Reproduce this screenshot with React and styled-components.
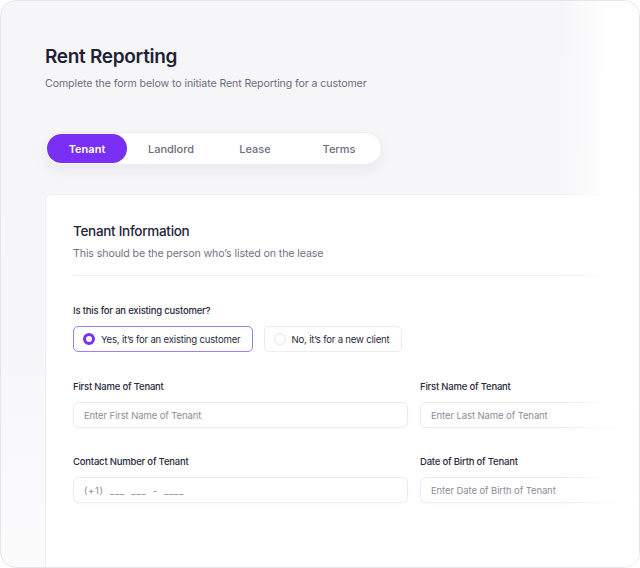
import styled, { createGlobalStyle } from 'styled-components';

const GlobalStyle = createGlobalStyle`
   * {
      box-sizing: border-box;
   }

   html, body {
      margin: 0;
      padding: 0;
      background: #ffffff;
      font-family: Inter, "Noto Sans", sans-serif;
      -webkit-font-smoothing: antialiased;
   }
`;

const tabs = ['Tenant', 'Landlord', 'Lease', 'Terms'];

const App = () => {
   return (
      <>
         <GlobalStyle />
         <Frame>
            <Header>
               <Title>Rent Reporting</Title>
               <Subtitle>
                  Complete the form below to initiate Rent Reporting for a
                  customer
               </Subtitle>
            </Header>

            <TabBar>
               {tabs.map((tab, i) => (
                  <Tab key={tab} $active={i === 0}>
                     {tab}
                  </Tab>
               ))}
            </TabBar>

            <Card>
               <CardTitle>Tenant Information</CardTitle>
               <CardHint>This should be the person who’s listed on the lease</CardHint>
               <Divider />

               <Question>Is this for an existing customer?</Question>
               <Choices>
                  <Choice $selected>
                     <Dot $selected />
                     Yes, it’s for an existing customer
                  </Choice>
                  <Choice>
                     <Dot />
                     No, it’s for a new client
                  </Choice>
               </Choices>

               <FieldGrid>
                  <Field>
                     <Label>First Name of Tenant</Label>
                     <Input placeholder="Enter First Name of Tenant" />
                  </Field>
                  <Field>
                     <Label>First Name of Tenant</Label>
                     <Input placeholder="Enter Last Name of Tenant" />
                  </Field>
                  <Field>
                     <Label>Contact Number of Tenant</Label>
                     <Input $masked placeholder="(+1)  ___  ___  -  ____" />
                  </Field>
                  <Field>
                     <Label>Date of Birth of Tenant</Label>
                     <Input placeholder="Enter Date of Birth of Tenant" />
                  </Field>
               </FieldGrid>
            </Card>

            <FadeRight />
         </Frame>
      </>
   );
};

const Frame = styled.div`
   position: relative;
   width: 640px;
   height: 568px;
   overflow: hidden;
   border: 1px solid #e4e4ea;
   border-radius: 16px;
   background: linear-gradient(180deg, #f6f6f9 0%, #f7f7fa 60%, #fbfbfc 100%);
   padding: 44px 0 0 44px;
   display: flex;
   flex-direction: column;
`;

const Header = styled.div`
   display: flex;
   flex-direction: column;
   gap: 8px;
`;

const Title = styled.h1`
   margin: 0;
   font-size: 19px;
   line-height: 24px;
   font-weight: 600;
   letter-spacing: -0.3px;
   color: #1f1f35;
`;

const Subtitle = styled.p`
   margin: 0;
   font-size: 10.6px;
   line-height: 14px;
   color: #6c6c7e;
   letter-spacing: -0.1px;
`;

const TabBar = styled.div`
   margin-top: 41px;
   align-self: flex-start;
   display: flex;
   width: 337px;
   height: 33px;
   background: #ffffff;
   border: 1px solid #ececf1;
   border-radius: 17px;
   box-shadow: 0 6px 14px rgba(30, 30, 60, 0.06);
`;

const Tab = styled.div`
   width: ${(p) => (p.$active ? '80px' : '84px')};
   margin: ${(p) => (p.$active ? '1px 2px 1px 1px' : '0')};
   display: flex;
   align-items: center;
   justify-content: center;
   border-radius: 15px;
   font-size: 11px;
   font-weight: ${(p) => (p.$active ? 600 : 500)};
   color: ${(p) => (p.$active ? '#ffffff' : '#6e6e80')};
   background: ${(p) => (p.$active ? '#7a2ff5' : 'transparent')};
`;

const Card = styled.div`
   margin-top: 29px;
   width: 740px;
   flex: 1;
   margin-bottom: -20px;
   background: #ffffff;
   border: 1px solid #efeff3;
   border-radius: 6px;
   padding: 27px 27px 0 27px;
   display: flex;
   flex-direction: column;
`;

const CardTitle = styled.h2`
   margin: 0;
   font-size: 13.5px;
   line-height: 18px;
   font-weight: 500;
   letter-spacing: -0.3px;
   color: #23233a;
`;

const CardHint = styled.p`
   margin: 7px 0 0;
   font-size: 10.6px;
   line-height: 14px;
   color: #717183;
   letter-spacing: -0.1px;
`;

const Divider = styled.div`
   margin-top: 14px;
   width: 540px;
   height: 1px;
   background: #ededf1;
`;

const Question = styled.div`
   margin-top: 28px;
   font-size: 9.5px;
   line-height: 13px;
   font-weight: 500;
   color: #2a2a3c;
   letter-spacing: -0.2px;
`;

const Choices = styled.div`
   margin-top: 9px;
   display: flex;
   gap: 11px;
`;

const Choice = styled.div`
   height: 26px;
   display: flex;
   align-items: center;
   gap: 6px;
   padding: 0 11px 0 9px;
   border-radius: 5px;
   border: 1px solid ${(p) => (p.$selected ? '#a57cf7' : '#ebebf0')};
   background: #ffffff;
   font-size: 9.6px;
   color: #2a2a3c;
   letter-spacing: -0.2px;
`;

const Dot = styled.span`
   width: 12px;
   height: 12px;
   border-radius: 50%;
   border: ${(p) => (p.$selected ? '3.5px solid #7a2ff5' : '1px solid #e3e3ea')};
   background: #ffffff;
`;

const FieldGrid = styled.div`
   margin-top: 28px;
   display: grid;
   grid-template-columns: 335px 335px;
   column-gap: 12px;
   row-gap: 27px;
`;

const Field = styled.div`
   display: flex;
   flex-direction: column;
   gap: 9px;
`;

const Label = styled.label`
   font-size: 9.5px;
   line-height: 13px;
   font-weight: 500;
   color: #2a2a3c;
   letter-spacing: -0.2px;
`;

const Input = styled.input`
   height: 26px;
   border: 1px solid #ebebf0;
   border-radius: 6px;
   padding: 0 10px;
   font-family: Inter, "Noto Sans", sans-serif;
   font-size: 9.5px;
   color: #2a2a3c;
   letter-spacing: ${(p) => (p.$masked ? '0.6px' : '-0.1px')};
   box-shadow: 0 1px 2px rgba(30, 30, 60, 0.03);
   outline: none;

   &::placeholder {
      color: #8c8c9c;
   }
`;

const FadeRight = styled.div`
   position: absolute;
   top: 0;
   right: 0;
   bottom: 0;
   width: 80px;
   pointer-events: none;
   background: linear-gradient(
      90deg,
      rgba(255, 255, 255, 0) 0%,
      rgba(255, 255, 255, 0.85) 55%,
      #ffffff 100%
   );
`;

export default App;
